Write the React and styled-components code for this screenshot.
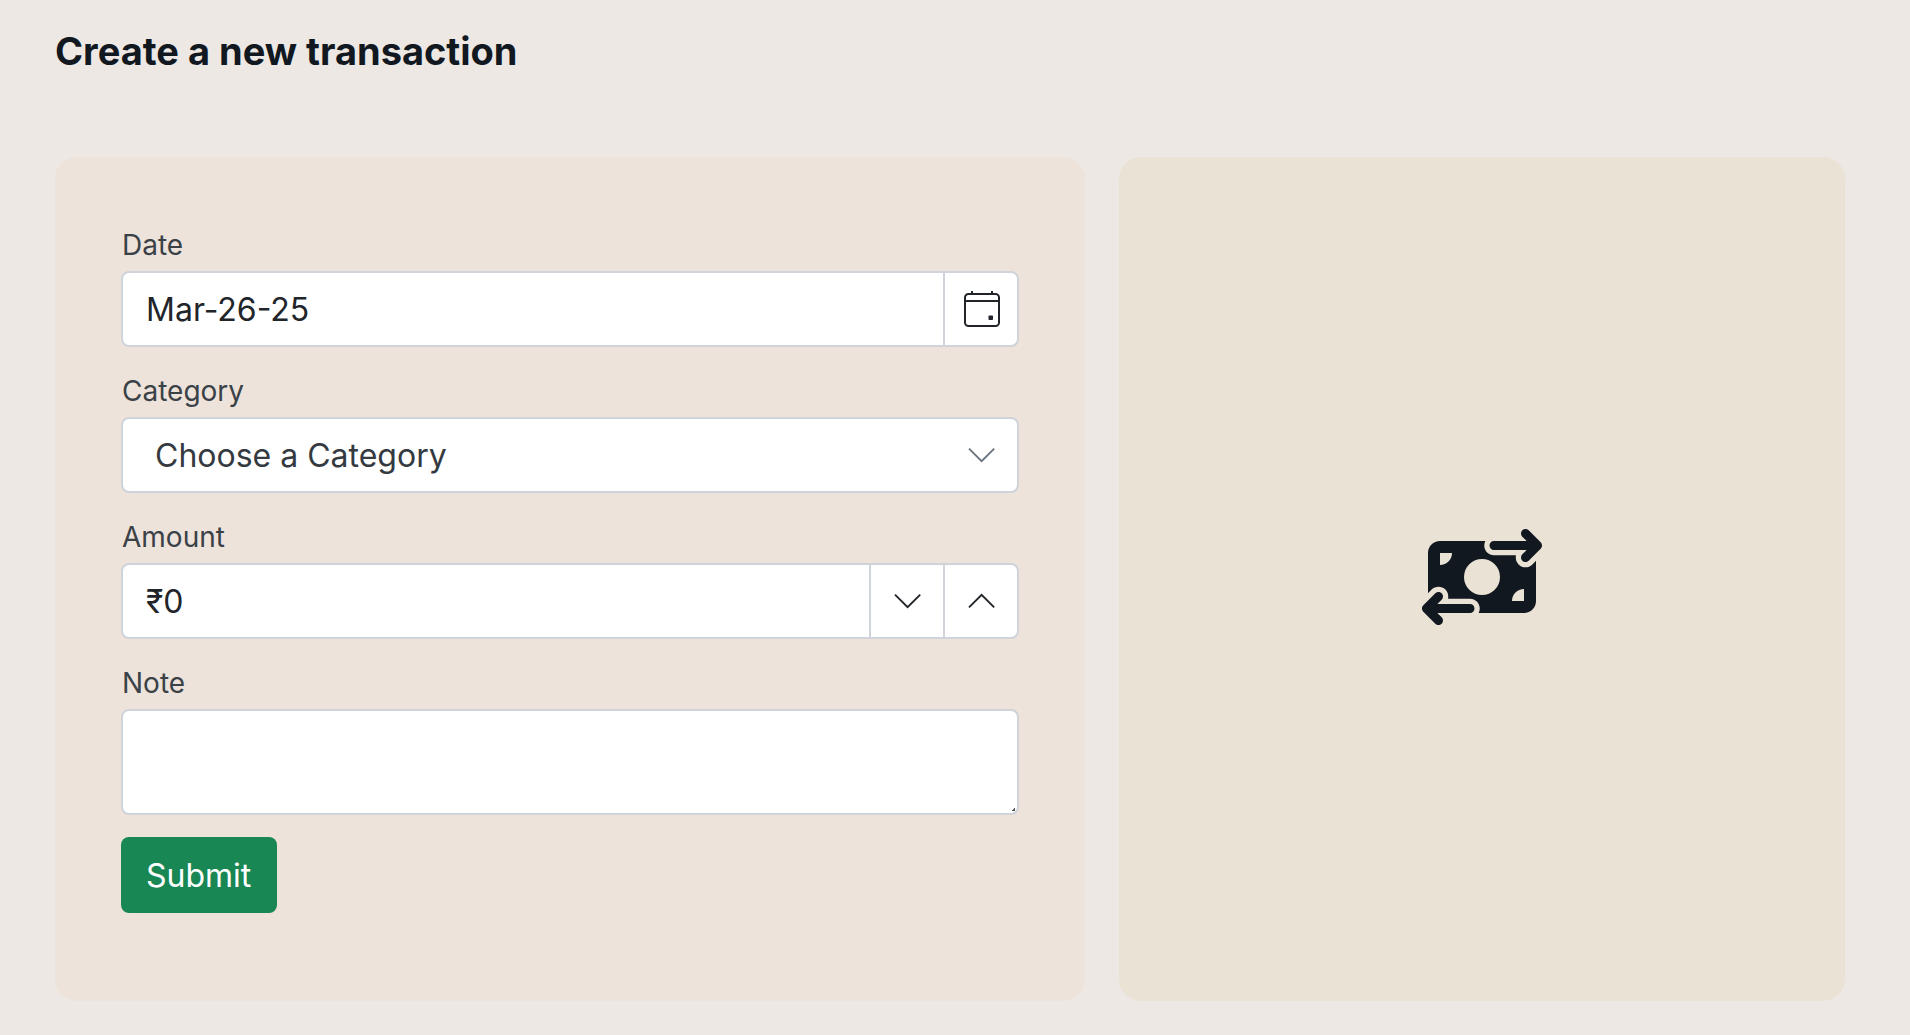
import React, { useState } from "react";
import styled, { createGlobalStyle } from "styled-components";
import { FaMoneyBillTransfer } from "react-icons/fa6";

const GlobalStyle = createGlobalStyle`
  *, *::before, *::after { box-sizing: border-box; }
  body {
    margin: 0;
    background: #ede8e4;
    color: #212529;
    font-family: Inter, "Liberation Sans", sans-serif;
    font-size: 32px;
    line-height: 48px;
  }
  button, input, select, textarea { font: inherit; color: inherit; margin: 0; }
`;

const Page = styled.main`
  padding: 22px 65px 34px 55px;
`;

const Title = styled.h1`
  margin: 0 0 77px;
  color: #12181f;
  font-size: 38px;
  line-height: 58px;
  font-weight: 700;
`;

const Panels = styled.div`
  display: grid;
  grid-template-columns: repeat(12, minmax(0, 1fr));
  gap: 34px;
`;

const FormPanel = styled.form`
  grid-column: span 7;
  padding: 66px 66px 88px;
  border-radius: 22px;
  background: #ede3da;
`;

const PicturePanel = styled.section`
  grid-column: span 5;
  display: flex;
  align-items: center;
  justify-content: center;
  padding-bottom: 4px;
  border-radius: 22px;
  background: #eae2d5;
  color: #12181f;
`;

const Field = styled.div`
  display: flex;
  flex-direction: column;
  gap: 4px;
  margin-bottom: 22px;
`;

const Label = styled.label`
  align-self: flex-start;
  padding: 0 1px;
  color: #3a4147;
  font-size: 28px;
  line-height: 44px;
`;

const Control = styled.div`
  position: relative;
  display: flex;
  overflow: hidden;
  height: ${(p) => (p.$tall ? "106px" : "76px")};
  border: 2px solid #ced4da;
  border-radius: 8px;
  background: #fff;
`;

const TextInput = styled.input`
  flex: 1;
  min-width: 0;
  padding: 2px 23px 0;
  border: 0;
  outline: 0;
  background: none;
`;

const Select = styled.select`
  flex: 1;
  padding: 2px 72px 0 32px;
  border: 0;
  outline: 0;
  appearance: none;
  background: none;
  color: #343a40;
`;

const SelectArrow = styled.span`
  position: absolute;
  top: 0;
  right: 0;
  display: flex;
  align-items: center;
  justify-content: center;
  width: 72px;
  height: 100%;
  padding-left: 1px;
  color: #6c757d;
  pointer-events: none;
`;

const TextArea = styled.textarea`
  flex: 1;
  padding: 10px 24px;
  border: 0;
  outline: 0;
  background: none;
  resize: vertical;

  &::-webkit-resizer {
    background: linear-gradient(135deg, transparent 40%, #555 40%) right 2px bottom 2px / 3px 3px no-repeat;
  }
`;

const AddonButton = styled.button`
  display: flex;
  align-items: center;
  justify-content: center;
  width: 74px;
  padding: 0 0 0 1px;
  border: 0;
  border-left: 2px solid #ced4da;
  background: none;
  cursor: pointer;
`;

const SubmitButton = styled.button`
  display: block;
  height: 76px;
  padding: 2px 26px 0 25px;
  border: 0;
  border-radius: 8px;
  background: #198754;
  color: #fff;
  cursor: pointer;
`;

const TransferIcon = styled(FaMoneyBillTransfer)`
  width: 120px;
  height: 96px;
`;

function Chevron({ up }) {
  return (
    <svg width="28" height="16" viewBox="0 0 28 16" fill="none" stroke="currentColor" strokeWidth="1.9" aria-hidden="true">
      <path d={up ? "M1 14.4 13.6 1.8l12.6 12.6" : "M1 1.6 13.6 14.2 26.2 1.6"} />
    </svg>
  );
}

function CalendarIcon() {
  return (
    <svg width="36" height="36" viewBox="0 0 36 36" fill="none" stroke="currentColor" strokeWidth="2" aria-hidden="true">
      <rect x="1" y="3" width="34" height="32" rx="3.5" />
      <path d="M1 10h34M8 0v3M28 0v3" />
      <rect x="24.5" y="24.5" width="4.5" height="4.5" rx=".8" fill="currentColor" stroke="none" />
    </svg>
  );
}

export default function App() {
  const [date, setDate] = useState("Mar-26-25");
  const [amount, setAmount] = useState(0);
  const [note, setNote] = useState("");

  return (
    <>
      <GlobalStyle />
      <Page>
        <Title>Create a new transaction</Title>
        <Panels>
          <FormPanel onSubmit={(e) => e.preventDefault()}>
            <Field>
              <Label htmlFor="date">Date</Label>
              <Control>
                <TextInput id="date" type="text" value={date} onChange={(e) => setDate(e.target.value)} />
                <AddonButton type="button" aria-label="Open calendar">
                  <CalendarIcon />
                </AddonButton>
              </Control>
            </Field>
            <Field>
              <Label htmlFor="category">Category</Label>
              <Control>
                <Select id="category" defaultValue="">
                  <option value="">Choose a Category</option>
                </Select>
                <SelectArrow>
                  <Chevron />
                </SelectArrow>
              </Control>
            </Field>
            <Field>
              <Label htmlFor="amount">Amount</Label>
              <Control>
                <TextInput
                  id="amount"
                  type="text"
                  inputMode="numeric"
                  value={`₹${amount}`}
                  onChange={(e) => setAmount(Number(e.target.value.replace(/\D/g, "")))}
                />
                <AddonButton type="button" aria-label="Decrease amount" onClick={() => setAmount(Math.max(0, amount - 1))}>
                  <Chevron />
                </AddonButton>
                <AddonButton type="button" aria-label="Increase amount" onClick={() => setAmount(amount + 1)}>
                  <Chevron up />
                </AddonButton>
              </Control>
            </Field>
            <Field>
              <Label htmlFor="note">Note</Label>
              <Control $tall>
                <TextArea id="note" value={note} onChange={(e) => setNote(e.target.value)} />
              </Control>
            </Field>
            <SubmitButton type="submit">Submit</SubmitButton>
          </FormPanel>
          <PicturePanel>
            <TransferIcon aria-hidden="true" />
          </PicturePanel>
        </Panels>
      </Page>
    </>
  );
}
